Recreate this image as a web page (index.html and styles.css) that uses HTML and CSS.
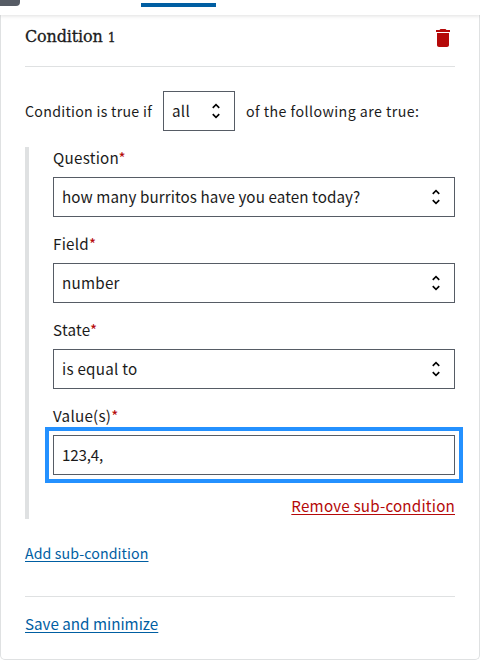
FILE: index.html
```html
<!DOCTYPE html>
<html lang="en">
<head>
<meta charset="utf-8">
<title>Condition</title>
<link rel="stylesheet" href="styles.css">
</head>
<body>
<svg class="defs" aria-hidden="true"><symbol id="unfold" viewBox="0 0 24 24"><path d="M12 5.83 15.17 9l1.41-1.41L12 3 7.41 7.59 8.83 9 12 5.83zm0 12.34L8.83 15l-1.41 1.41L12 21l4.59-4.59L15.17 15 12 18.17z"/></symbol></svg>
<header class="topbar"><span class="stub"></span><span class="active-tab"></span></header>
<main class="card">
  <div class="head">
    <h2 class="title">Condition <span class="oldstyle">1</span></h2>
    <svg class="trash" viewBox="0 0 24 24"><path d="M6 19c0 1.1.9 2 2 2h8c1.1 0 2-.9 2-2V7H6v12zM19 4h-3.5l-1-1h-5l-1 1H5v2h14V4z"/></svg>
  </div>
  <div class="match">
    <span class="small lead">Condition is true if</span>
    <div class="box all"><span class="t-all">all</span><svg class="arrows"><use href="#unfold"/></svg></div>
    <span class="small tail">of the following are true:</span>
  </div>
  <section class="sub">
    <div class="field"><div class="label">Question<span class="req">*</span></div>
      <div class="box"><span class="t-burritos">how many burritos have you eaten today?</span><svg class="arrows"><use href="#unfold"/></svg></div></div>
    <div class="field"><div class="label">Field<span class="req">*</span></div>
      <div class="box"><span class="t-short">number</span><svg class="arrows"><use href="#unfold"/></svg></div></div>
    <div class="field"><div class="label">State<span class="req">*</span></div>
      <div class="box"><span class="t-short">is equal to</span><svg class="arrows"><use href="#unfold"/></svg></div></div>
    <div class="field"><div class="label">Value(s)<span class="req">*</span></div>
      <div class="box focused"><span class="t-input">123,4,</span></div></div>
    <div class="remove-row"><a class="link remove">Remove sub-condition</a></div>
  </section>
  <div class="add-row"><a class="link add">Add sub-condition</a></div>
  <div class="save-row"><a class="link save">Save and minimize</a></div>
</main>
</body>
</html>
```
FILE: styles.css
```css
* { box-sizing: border-box; }
body {
  margin: 0;
  height: 660px;
  display: flex;
  flex-direction: column;
  overflow: hidden;
  background: #fff;
  color: #1b1b1b;
  font: 15.2px/20px "Noto Sans CJK SC", "Noto Sans", sans-serif;
  white-space: nowrap;
}
.defs { display: none; }
.topbar {
  display: flex;
  height: 15px;
  flex: none;
  background: #fff;
  box-shadow: 0 1px 4px rgba(0, 0, 0, .13);
  z-index: 1;
}
.stub { width: 20px; height: 6px; background: #565c65; border-radius: 0 0 4px 0; }
.active-tab { width: 75px; height: 4px; margin: 3px 0 0 121px; background: #005ea2; }
.card {
  height: 645px;
  border: 1px solid #dfe1e2;
  border-top: 0;
  border-radius: 0 0 5px 5px;
  padding: 0 24px;
}
.head {
  display: flex;
  justify-content: space-between;
  height: 52px;
  border-bottom: 1px solid #dfe1e2;
}
.title {
  margin: 11px 0 0;
  font: 500 16px/22px "DejaVu Serif", serif;
  letter-spacing: -.15px;
  -webkit-text-stroke: .3px #1b1b1b;
}
.oldstyle { font-size: 12.5px; }
.trash { width: 24px; height: 24px; margin-top: 11px; fill: #b50909; }
.match { display: flex; align-items: center; height: 40px; margin-top: 24px; }
.small { font-size: 14.2px; letter-spacing: .28px; }
.lead { width: 138px; }
.tail { margin-left: 11px; letter-spacing: .45px; }
.box {
  display: flex;
  align-items: center;
  justify-content: space-between;
  height: 40px;
  border: 1px solid #565c65;
  padding: 0 8px;
}
.box span { padding-bottom: 2px; }
.all { width: 72px; }
.t-all { letter-spacing: .3px; }
.t-burritos { letter-spacing: .09px; }
.t-short { letter-spacing: .25px; }
.t-input { letter-spacing: -.2px; }
.arrows { width: 20px; height: 20px; }
.sub { height: 372px; margin-top: 16px; padding-left: 24px; border-left: 4px solid #dfe1e2; }
.field { height: 86px; }
.label { height: 30px; line-height: 20px; letter-spacing: .25px; }
.req { color: #b50909; }
.focused { outline: 4px solid #2491ff; outline-offset: 4px; }
.remove-row { display: flex; justify-content: flex-end; padding-top: 4px; }
.link { color: #005ea2; text-decoration: underline; text-underline-offset: 2px; text-decoration-thickness: 1px; }
.remove { color: #b50909; letter-spacing: .2px; }
.add-row { height: 78px; padding-top: 23px; border-bottom: 1px solid #dfe1e2; }
.add { font-size: 14.2px; letter-spacing: .1px; }
.save-row { padding-top: 16px; }
```
